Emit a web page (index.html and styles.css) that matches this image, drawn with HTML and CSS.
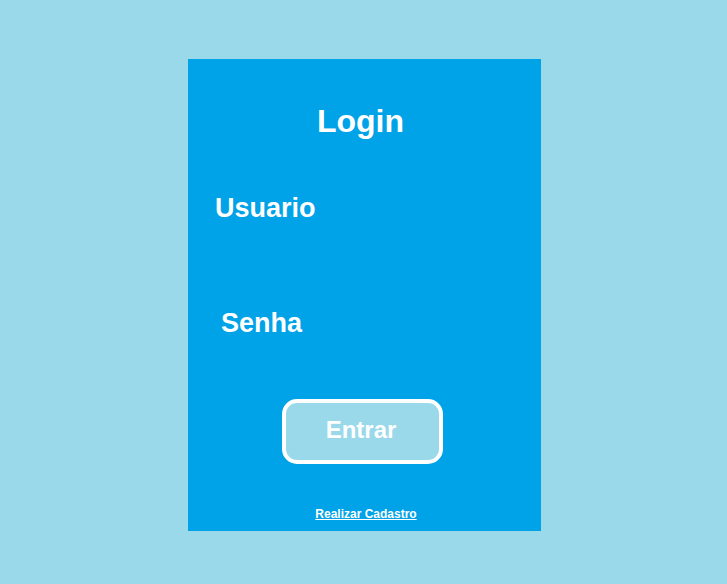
FILE: index.html
```html
<!DOCTYPE html>
<html lang="pt">
<head>
<meta charset="utf-8">
<title>Login</title>
<link rel="stylesheet" href="styles.css">
</head>
<body>
<div class="panel">
  <h1 class="title">Login</h1>
  <div class="label label-user">Usuario</div>
  <div class="label label-pass">Senha</div>
  <button class="btn" type="button">Entrar</button>
  <a class="link" href="#">Realizar Cadastro</a>
</div>
</body>
</html>
```
FILE: styles.css
```css
html, body {
  margin: 0;
  padding: 0;
}
body {
  background: #99d9ea;
  font-family: "Liberation Sans", Arial, sans-serif;
  height: 584px;
  overflow: hidden;
}
.panel {
  box-sizing: border-box;
  width: 353px;
  height: 472px;
  margin: 59px 0 0 188px;
  background: #00a2e8;
  padding-top: 42px;
  display: flex;
  flex-direction: column;
  color: #ffffff;
}
.title {
  margin: 0;
  font-size: 32px;
  line-height: 40px;
  font-weight: bold;
  text-align: center;
  padding-right: 8px;
}
.label {
  font-size: 27px;
  line-height: 34px;
  font-weight: bold;
}
.label-user {
  margin-top: 50px;
  padding-left: 27px;
}
.label-pass {
  margin-top: 81px;
  padding-left: 33px;
}
.btn {
  box-sizing: border-box;
  margin: 59px 0 0 94px;
  width: 161px;
  height: 65px;
  border: 4px solid #ffffff;
  border-radius: 15px;
  background: #99d9ea;
  color: #ffffff;
  font-family: "Liberation Sans", Arial, sans-serif;
  font-size: 24px;
  font-weight: bold;
  padding: 0 3px 3px 0;
  line-height: 54px;
}
.link {
  margin-top: 43px;
  align-self: center;
  padding-left: 3px;
  font-size: 12px;
  line-height: 14px;
  font-weight: bold;
  color: #ffffff;
  text-decoration: underline;
}
```
